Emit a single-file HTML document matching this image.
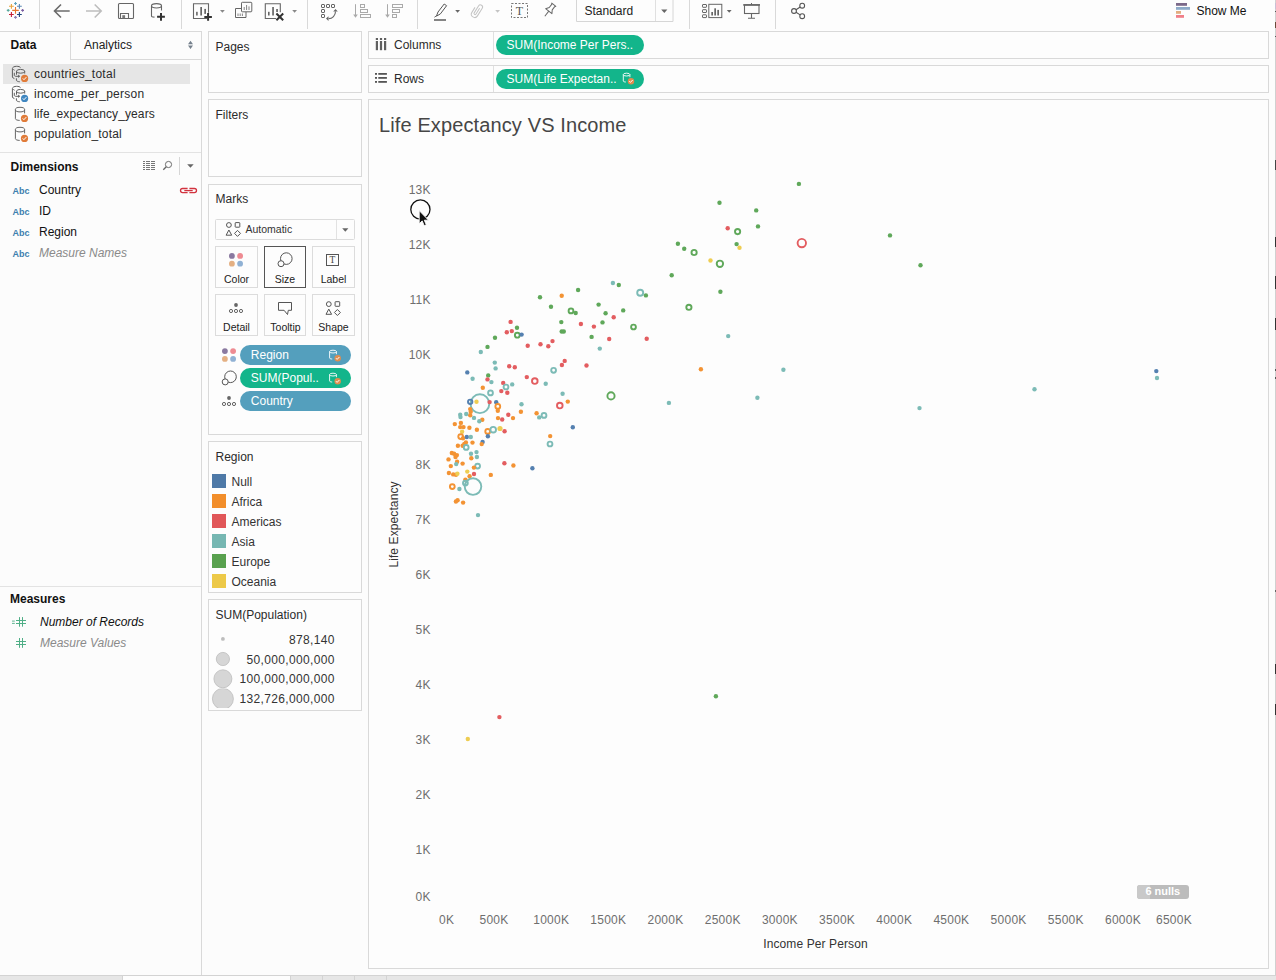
<!DOCTYPE html>
<html><head><meta charset="utf-8">
<style>
*{margin:0;padding:0;box-sizing:border-box}
html,body{width:1276px;height:980px;overflow:hidden;background:#fcfcfc;font-family:"Liberation Sans",sans-serif;color:#2b2b2b;font-size:12px}
.a{position:absolute}
.t{position:absolute;white-space:pre;line-height:14px;font-size:12px}
.card{position:absolute;border:1px solid #d9d9d9;background:#fdfdfd}
.hl{position:absolute;background:#dedede}
.vl{position:absolute;background:#d9d9d9}
.pill{position:absolute;border-radius:10px;color:#fff;font-size:12px;line-height:20px;white-space:pre}
.g{background:#13b58b}
.abc{position:absolute;font-size:9px;font-weight:bold;color:#3e7fae;line-height:10px;letter-spacing:0px}
</style></head><body>

<!-- TOOLBAR -->
<div class="a" style="left:0;top:0;width:1276px;height:31px;background:#fdfdfd"></div>
<div class="hl" style="left:0;top:31px;width:202px;height:1px;background:#d9d9d9"></div>
<svg class="a" style="left:0;top:0" width="1276" height="32">
<g stroke-linecap="butt">
<!-- tableau logo -->
<g stroke-width="1.1">
<path d="M15.5 7.1v6.6M12.2 10.4h6.6" stroke="#e8762d"/>
<path d="M11.4 3.9v4.8M9 6.3h4.8" stroke="#e8a23a"/>
<path d="M19.4 3.9v4.8M17 6.3h4.8" stroke="#5b87b5"/>
<path d="M11.4 12.1v4.8M9 14.5h4.8" stroke="#c72037"/>
<path d="M19.4 12.1v4.8M17 14.5h4.8" stroke="#1f457e"/>
<path d="M15.5 2.1v2.8M14.1 3.5h2.8" stroke="#5b9fbb"/>
<path d="M8.2 9v2.8M6.8 10.4h2.8" stroke="#59a89c"/>
<path d="M22.6 9v2.8M21.2 10.4h2.8" stroke="#7b5fa3"/>
<path d="M15.5 16v2.8M14.1 17.4h2.8" stroke="#8b79b0"/>
</g>
</g>
<rect x="39" y="0" width="1" height="29" fill="#d9d9d9"/>
<!-- back / forward -->
<path d="M54.5 11h15.2M61 4.5L54.5 11L61 17.5" fill="none" stroke="#6b6b6b" stroke-width="1.6"/>
<path d="M86 11h15.2M94.7 4.5L101.2 11L94.7 17.5" fill="none" stroke="#bdbdbd" stroke-width="1.6"/>
<!-- save -->
<rect x="118.5" y="3.5" width="15" height="15" rx="1" fill="none" stroke="#666" stroke-width="1.1"/>
<path d="M120.5 18.5v-5h8v5" fill="none" stroke="#666" stroke-width="1.1"/>
<rect x="122.3" y="15.2" width="2.8" height="3" fill="#777"/>
<!-- new data source -->
<path d="M151.5 6v10c0 .8 1.2 1.1 3 1.1M161.5 6v4.6" fill="none" stroke="#666" stroke-width="1.1"/>
<ellipse cx="156.5" cy="5.8" rx="5" ry="2.2" fill="none" stroke="#666" stroke-width="1.1"/>
<path d="M161 12.9v7.8M157.1 16.8h7.8" stroke="#333" stroke-width="2"/>
<rect x="181" y="0" width="1" height="29" fill="#d9d9d9"/>
<!-- new worksheet -->
<path d="M207 18.5h-13.5v-14.8h15v9" fill="none" stroke="#666" stroke-width="1.1"/>
<rect x="196.1" y="11.8" width="1.6" height="3.7" fill="#666"/>
<rect x="200.3" y="7" width="1.7" height="8.5" fill="#666"/>
<rect x="204.3" y="8.9" width="1.7" height="5" fill="#666"/>
<path d="M208.1 13.1v7.6M204.3 16.9h7.6" stroke="#333" stroke-width="2"/>
<path d="M220 10l4.8 0l-2.4 2.8z" fill="#888"/>
<!-- duplicate -->
<path d="M241 8.5h-5.5v9h10.5v-5.5" fill="none" stroke="#666" stroke-width="1"/>
<rect x="241.5" y="2.3" width="10.3" height="9.5" rx="0.8" fill="#fdfdfd" stroke="#666" stroke-width="1"/>
<path d="M244.2 10v-3M246.6 10v-5M249 10v-3.6M238 16v-2.5M240.2 16v-2.5M242.4 16v-2.5" stroke="#777" stroke-width="0.9"/>
<!-- clear sheet -->
<path d="M276 18.5h-10.7v-14.8h15v8.5" fill="none" stroke="#666" stroke-width="1.1"/>
<rect x="268" y="11.8" width="1.6" height="3.7" fill="#666"/>
<rect x="272.2" y="7" width="1.7" height="8.5" fill="#666"/>
<rect x="276.2" y="9" width="1.7" height="3" fill="#666"/>
<path d="M276.4 13.5l6.8 6.8M283.2 13.5l-6.8 6.8" stroke="#333" stroke-width="2"/>
<path d="M292.2 10l4.8 0l-2.4 2.8z" fill="#888"/>
<rect x="307" y="0" width="1" height="29" fill="#d9d9d9"/>
<!-- swap -->
<g fill="none" stroke="#666" stroke-width="1">
<rect x="321.5" y="4.5" width="3" height="3" rx=".5"/><rect x="326.5" y="4.5" width="3" height="3" rx=".5"/><rect x="331.5" y="4.5" width="3" height="3" rx=".5"/>
<rect x="321.5" y="9.5" width="3" height="3" rx=".5"/><rect x="321.5" y="14.5" width="3" height="3" rx=".5"/>
<path d="M328.6 18.6A7 7 0 0 0 335.5 11.6" stroke-width="1.1"/>
</g>
<path d="M335.5 9.1l2.3 2.5h-4.6z M326 18.6l2.5-2.3v4.6z" fill="#666"/>
<!-- sort asc -->
<g fill="none" stroke="#aaa" stroke-width="1">
<path d="M355.5 4.2v12"/>
<rect x="360.5" y="4.5" width="4" height="3"/><rect x="360.5" y="9.5" width="7" height="3"/><rect x="360.5" y="14.5" width="10" height="3"/>
<path d="M387.5 4.2v12"/>
<rect x="392.5" y="4.5" width="10" height="3"/><rect x="392.5" y="9.5" width="7" height="3"/><rect x="392.5" y="14.5" width="4" height="3"/>
</g>
<path d="M353.2 14.5h4.6l-2.3 3.3z M385.2 14.5h4.6l-2.3 3.3z" fill="#aaa"/>
<rect x="417" y="0" width="1" height="29" fill="#d9d9d9"/>
<!-- highlighter -->
<path d="M436.4 16.2l1.6-4.2l6.2-8l2.4 1.7l-6.2 8.2z" fill="none" stroke="#555" stroke-width="1"/>
<path d="M434.5 17.2l1.4-1" stroke="#555" stroke-width="1"/>
<rect x="434" y="19.2" width="12" height="1.6" fill="#666"/>
<path d="M455.2 10l4.8 0l-2.4 2.8z" fill="#666"/>
<!-- paperclip -->
<path transform="translate(477,10.4) rotate(32)" d="M1.1 -3.2V3.6A1.1 1.1 0 0 1 -1.1 3.6V-4.6A2.2 2.2 0 0 1 3.3 -4.6V4.4A3.3 3.3 0 0 1 -3.3 4.4V-1.5" fill="none" stroke="#c4c4c4" stroke-width="1"/>
<path d="M495.2 10l4.8 0l-2.4 2.8z" fill="#c4c4c4"/>
<!-- text box -->
<rect x="511.5" y="3.5" width="16" height="14" fill="none" stroke="#777" stroke-width="1" stroke-dasharray="2 1.5"/>
<text x="519.5" y="15" text-anchor="middle" font-family="Liberation Serif" font-size="12" fill="#555">T</text>
<!-- pin -->
<g transform="translate(550,9.6) rotate(38)" fill="none" stroke="#666" stroke-width="1" stroke-linejoin="round">
<path d="M-2.6 -6.2H2.6L1.9 -5.2V-1.2L4 2H-4L-1.9 -1.2V-5.2Z"/>
<path d="M0 2V8.4"/>
</g>
<!-- standard dropdown -->
<path d="M576.5 -1v22.5h96.5v-22.5" fill="#fdfdfd" stroke="#d6d6d6" stroke-width="1"/>
<rect x="655" y="0" width="1" height="21" fill="#e0e0e0"/>
<text x="584.5" y="14.8" font-family="Liberation Sans" font-size="12" fill="#222">Standard</text>
<path d="M661.2 9.5h6.2l-3.1 3.5z" fill="#666"/>
<rect x="689" y="0" width="1" height="29" fill="#d9d9d9"/>
<!-- dashboard icon -->
<g fill="none" stroke="#666" stroke-width="1">
<rect x="702.5" y="4.5" width="4" height="2.8" rx=".5"/><rect x="702.5" y="9.7" width="4" height="2.8" rx=".5"/><rect x="702.5" y="14.8" width="4" height="2.8" rx=".5"/>
<rect x="708.8" y="4.3" width="13" height="13.3"/>
</g>
<rect x="711.3" y="12" width="1.7" height="3.5" fill="#666"/><rect x="714.3" y="8.3" width="1.7" height="7.2" fill="#666"/><rect x="717.3" y="9.9" width="1.7" height="5.6" fill="#666"/>
<path d="M726.8 10h4.8l-2.4 2.8z" fill="#666"/>
<!-- presentation -->
<path d="M743.2 4.9h16.8" stroke="#666" stroke-width="1.6"/>
<rect x="744.5" y="5" width="14.5" height="8.5" fill="none" stroke="#666" stroke-width="1.1"/>
<path d="M751.5 13.5v4.5M748 18.3h7" stroke="#666" stroke-width="1.1"/>
<path d="M751.5 3v2" stroke="#666" stroke-width="1"/>
<rect x="775" y="0" width="1" height="29" fill="#d9d9d9"/>
<!-- share -->
<g fill="none" stroke="#555" stroke-width="1.1">
<circle cx="802.2" cy="5.7" r="2.4"/><circle cx="794" cy="11" r="2.4"/><circle cx="802.2" cy="16.2" r="2.4"/>
<path d="M796 9.7l4.2-2.7M796 12.3l4.2 2.6"/>
</g>
<!-- show me -->
<rect x="1176" y="3" width="11" height="2.8" fill="#7c6a8a"/>
<rect x="1176" y="7" width="14" height="2.8" fill="#8eabc9"/>
<rect x="1176" y="11" width="5" height="2.8" fill="#e2ad80"/>
<rect x="1176" y="15" width="8" height="2.8" fill="#f07f89"/>
<text x="1196.5" y="15" font-family="Liberation Sans" font-size="12" fill="#111">Show Me</text>
</svg>


<!-- LEFT PANE -->
<div class="vl" style="left:201px;top:31px;width:1px;height:944px"></div>
<div class="t" style="left:10.5px;top:38px;font-weight:bold;color:#111">Data</div>
<div class="a" style="left:70px;top:31px;width:131px;height:29px;border-left:1px solid #d9d9d9;border-bottom:1px solid #d9d9d9"></div>
<div class="t" style="left:84px;top:38px;color:#222">Analytics</div>
<div class="a" style="left:3px;top:64px;width:187px;height:20px;background:#e6e6e6"></div>
<div class="t" style="left:34px;top:67px;letter-spacing:0.25px">countries_total</div>
<div class="t" style="left:34px;top:87px;letter-spacing:0.25px">income_per_person</div>
<div class="t" style="left:34px;top:107px;letter-spacing:0.1px">life_expectancy_years</div>
<div class="t" style="left:34px;top:127px;letter-spacing:0.2px">population_total</div>
<div class="hl" style="left:0;top:152px;width:201px;height:1px;background:#e3e3e3"></div>
<div class="t" style="left:10.5px;top:160px;font-weight:bold;color:#111">Dimensions</div>
<div class="abc" style="left:12.5px;top:185.5px">Abc</div>
<div class="t" style="left:39px;top:183px;color:#111">Country</div>
<div class="abc" style="left:12.5px;top:206.5px">Abc</div>
<div class="t" style="left:39px;top:204px;color:#111">ID</div>
<div class="abc" style="left:12.5px;top:227.5px">Abc</div>
<div class="t" style="left:39px;top:225px;color:#111">Region</div>
<div class="abc" style="left:12.5px;top:248.5px">Abc</div>
<div class="t" style="left:39px;top:246px;font-style:italic;color:#8a8a8a">Measure Names</div>
<div class="hl" style="left:0;top:586px;width:201px;height:1px;background:#e3e3e3"></div>
<div class="t" style="left:10px;top:592px;font-weight:bold;color:#111">Measures</div>
<div class="t" style="left:40px;top:615px;font-style:italic;color:#111">Number of Records</div>
<div class="t" style="left:40px;top:636px;font-style:italic;color:#8a8a8a">Measure Values</div>
<svg class="a" style="left:0;top:32px" width="201" height="640" viewBox="0 32 201 640">
<defs>
<g id="chk"><circle r="3.6"/><path d="M-1.8 0l1.2 1.3l2.4-2.6" fill="none" stroke="#fff" stroke-width="1"/></g>
<g id="multidb" fill="none" stroke="#5f5f5f" stroke-width="1">
<path d="M12.4 77V68.6C12.4 67.2 14.4 66.3 16.6 66.3C18.4 66.3 19.9 66.8 20.5 67.5"/>
<path d="M12.4 77C12.6 77.8 13.4 78.3 14.4 78.6"/>
<path d="M13.4 69.2C13.6 69.8 14 70.1 14.5 70.3"/>
<path d="M14.3 72.8V75.2C14.3 75.9 14.9 76.3 15.8 76.3H19"/>
<path d="M18.2 74.6l2 1.7l-2 1.7z" fill="#5f5f5f" stroke="none"/>
<ellipse cx="20.6" cy="71.3" rx="4.1" ry="1.9"/>
<path d="M16.5 71.3V74.7M24.7 71.3V73.6"/>
<path d="M16.4 78.3V80.2C16.4 81 17.8 81.6 19.8 81.8"/>
</g>
</defs>
<path d="M188 44.2h5l-2.5-3.4z M188 45.6h5l-2.5 3.4z" fill="#75808c"/>
<!-- data source icons -->
<use href="#multidb"/>
<use href="#chk" x="24.6" y="78.4" fill="#e07b39"/>
<use href="#multidb" y="20"/>
<use href="#chk" x="24.6" y="98.4" fill="#3f86c0"/>
<g fill="none" stroke="#666" stroke-width="1">
<ellipse cx="20" cy="109.6" rx="4.6" ry="2.3"/>
<path d="M15.4 109.6v9c0 1.1 2 1.8 4.3 1.8M24.6 109.6v3.8"/>
<ellipse cx="20" cy="129.6" rx="4.6" ry="2.3"/>
<path d="M15.4 129.6v9c0 1.1 2 1.8 4.3 1.8M24.6 129.6v3.8"/>
</g>
<use href="#chk" x="24.5" y="118.4" fill="#e07b39"/>
<use href="#chk" x="24.5" y="138.4" fill="#e07b39"/>
<!-- dimensions header icons -->
<g stroke="#666" stroke-width="0.9">
<path d="M143 161.5h2M146 161.5h4M151 161.5h4M143 163.5h2M146 163.5h4M151 163.5h4M143 165.5h2M146 165.5h4M151 165.5h4M143 167.5h2M146 167.5h4M151 167.5h4M143 169.5h2M146 169.5h4M151 169.5h4"/>
</g>
<circle cx="168.5" cy="164.5" r="3.1" fill="none" stroke="#666" stroke-width="0.95"/>
<path d="M166.3 166.8l-3 3" stroke="#666" stroke-width="1.3"/>
<rect x="179" y="157" width="1" height="18" fill="#d6d6d6"/>
<path d="M187.2 164.2h6.5l-3.25 3.6z" fill="#666"/>
<!-- link icon -->
<g fill="none" stroke="#d2333f" stroke-width="1.3">
<path d="M187.6 188.5H182.6A2.1 2.1 0 0 0 182.6 192.7H187.6"/>
<path d="M189.4 188.5H194.4A2.1 2.1 0 0 1 194.4 192.7H189.4"/>
<path d="M184.3 190.6H192.7"/>
</g>
<!-- measures icons -->
<g stroke="#4fae86" stroke-width="1">
<path d="M19.5 617.1v9.6M22.5 617.1v9.6M16 620.5h10M16 623.5h10"/>
<path d="M12 621.1h2.8M12 623.4h2.8" stroke-width="0.9"/>
<path d="M19.5 638v9.8M22.5 638v9.8M16 641.5h10M16 644.5h10"/>
</g>
</svg>


<!-- MIDDLE CARDS -->
<div class="card" style="left:208px;top:31px;width:154px;height:62px"></div>
<div class="t" style="left:215.5px;top:40px">Pages</div>
<div class="card" style="left:208px;top:99px;width:154px;height:78px"></div>
<div class="t" style="left:215.5px;top:108px">Filters</div>
<div class="card" style="left:208px;top:184px;width:154px;height:251px"></div>
<div class="t" style="left:215.5px;top:191.5px">Marks</div>
<div class="card" style="left:208px;top:441px;width:154px;height:152px"></div>
<div class="t" style="left:215.5px;top:449.5px">Region</div>
<div class="card" style="left:208px;top:599px;width:154px;height:112px"></div>
<div class="t" style="left:215.5px;top:607.5px">SUM(Population)</div>
<svg class="a" style="left:208px;top:184px" width="160" height="530" viewBox="208 184 160 530">
<defs>
<g id="chk2"><circle r="3.2" fill="#e08d4f"/><path d="M-1.7 0l1.1 1.2l2.3-2.4" fill="none" stroke="#fff" stroke-width="1"/></g>
<g id="shapes" fill="none" stroke="#555" stroke-width="1">
<circle cx="0" cy="0" r="2.4"/>
<rect x="6.3" y="-2.4" width="4.6" height="4.6" rx=".5"/>
<path d="M-2.8 10.2h5.6l-2.8-5.2z"/>
<path d="M8.6 5.4l3 3l-3 3l-3-3z"/>
</g>
<g id="sizeic" stroke="#555" stroke-width="1">
<circle cx="5.3" cy="-5.1" r="5.8" fill="none"/>
<circle cx="0" cy="0" r="3" fill="#fdfdfd"/>
</g>
<g id="detailic">
<circle cx="0" cy="0" r="1.9" fill="#666"/>
<g fill="none" stroke="#555" stroke-width="0.9"><circle cx="-5" cy="6" r="1.6"/><circle cx="0" cy="6" r="1.6"/><circle cx="5" cy="6" r="1.6"/></g>
</g>
<g id="colorsic">
<circle cx="0" cy="0" r="2.9" fill="#8a79a0"/><circle cx="8.2" cy="0" r="2.9" fill="#ee8b92"/>
<circle cx="0" cy="7.8" r="2.9" fill="#e4b083"/><circle cx="8.2" cy="7.8" r="2.9" fill="#90b1d4"/>
</g>
</defs>
<!-- marks type dropdown -->
<rect x="215.5" y="219.5" width="139" height="20" rx="1" fill="#fdfdfd" stroke="#dcdcdc"/>
<rect x="336" y="220" width="1" height="19" fill="#e2e2e2"/>
<path d="M342.2 228.3h6.2l-3.1 3.4z" fill="#666"/>
<use href="#shapes" x="228.9" y="225"/>
<text x="245.5" y="232.8" font-family="Liberation Sans" font-size="10.5" fill="#333">Automatic</text>
<!-- buttons -->
<g fill="#fdfdfd" stroke="#dcdcdc">
<rect x="215.5" y="246.5" width="42" height="41"/>
<rect x="312.5" y="246.5" width="42" height="41"/>
<rect x="215.5" y="294.5" width="42" height="41"/>
<rect x="264.5" y="294.5" width="41" height="41"/>
<rect x="312.5" y="294.5" width="42" height="41"/>
</g>
<rect x="264.5" y="246.5" width="41" height="41" fill="#fdfdfd" stroke="#555"/>
<use href="#colorsic" x="231.9" y="255.9"/>
<use href="#sizeic" x="281" y="263.7"/>
<rect x="326.5" y="254.5" width="12" height="11" fill="none" stroke="#555" stroke-width="1"/>
<text x="332.5" y="263.3" text-anchor="middle" font-family="Liberation Serif" font-size="9.5" fill="#444">T</text>
<use href="#detailic" x="236" y="305"/>
<path d="M278.5 302.5h13v7.8h-3.2l-.8 4.2l-3.4-4.2h-5.6z" fill="none" stroke="#555" stroke-width="1" stroke-linejoin="round"/>
<use href="#shapes" x="328.8" y="304.1"/>
<g font-family="Liberation Sans" font-size="10.5" fill="#222" text-anchor="middle">
<text x="236.5" y="282.5">Color</text>
<text x="285" y="282.5">Size</text>
<text x="333.5" y="282.5">Label</text>
<text x="236.5" y="330.8">Detail</text>
<text x="285.5" y="330.8">Tooltip</text>
<text x="333.5" y="330.8">Shape</text>
</g>
<!-- pills -->
<use href="#colorsic" x="224.9" y="351.1"/>
<rect x="240" y="345" width="111" height="20" rx="10" fill="#549fbd"/>
<text x="250.8" y="358.8" font-family="Liberation Sans" font-size="12" fill="#fff">Region</text>
<g fill="none" stroke="#fff" stroke-width="0.9"><ellipse cx="333" cy="351.6" rx="3.4" ry="1.4"/><path d="M329.6 351.6v6.3c0 .7 1.3 1.1 2.6 1.1M336.4 351.6v2.6"/></g>
<use href="#chk2" x="337.7" y="358.2"/>
<use href="#sizeic" x="225.2" y="381.9"/>
<rect x="240" y="368" width="111" height="20" rx="10" fill="#13b58b"/>
<text x="250.8" y="381.8" font-family="Liberation Sans" font-size="12" fill="#fff">SUM(Popul..</text>
<g fill="none" stroke="#fff" stroke-width="0.9"><ellipse cx="333" cy="374.6" rx="3.4" ry="1.4"/><path d="M329.6 374.6v6.3c0 .7 1.3 1.1 2.6 1.1M336.4 374.6v2.6"/></g>
<use href="#chk2" x="337.7" y="381.2"/>
<use href="#detailic" x="229" y="398"/>
<rect x="240" y="391" width="111" height="20" rx="10" fill="#549fbd"/>
<text x="250.8" y="405" font-family="Liberation Sans" font-size="12" fill="#fff">Country</text>
<!-- legend swatches -->
<rect x="212" y="474" width="14" height="14" fill="#4e79a7"/>
<rect x="212" y="494" width="14" height="14" fill="#f28e2b"/>
<rect x="212" y="514" width="14" height="14" fill="#e15759"/>
<rect x="212" y="534" width="14" height="14" fill="#76b7b2"/>
<rect x="212" y="554" width="14" height="14" fill="#59a14f"/>
<rect x="212" y="574" width="14" height="14" fill="#edc948"/>
<g font-family="Liberation Sans" font-size="12" fill="#333">
<text x="231.5" y="485.7">Null</text>
<text x="231.5" y="505.7">Africa</text>
<text x="231.5" y="525.7">Americas</text>
<text x="231.5" y="545.7">Asia</text>
<text x="231.5" y="565.7">Europe</text>
<text x="231.5" y="585.7">Oceania</text>
</g>
<!-- size legend -->
<defs><clipPath id="cl4"><rect x="210" y="688.5" width="30" height="19.5"/></clipPath></defs>
<circle cx="222.9" cy="638.9" r="1.9" fill="#bdbdbd"/>
<circle cx="222.9" cy="659" r="6.6" fill="#d6d6d6" stroke="#bcbcbc" stroke-width="0.8"/>
<circle cx="222.9" cy="678.8" r="9" fill="#d6d6d6" stroke="#bcbcbc" stroke-width="0.8"/>
<circle cx="222.9" cy="698.8" r="10.5" fill="#d6d6d6" stroke="#bcbcbc" stroke-width="0.8" clip-path="url(#cl4)"/>
<g font-family="Liberation Sans" font-size="12" fill="#333" text-anchor="end" letter-spacing="0.35">
<text x="334.8" y="644">878,140</text>
<text x="334.8" y="663.7">50,000,000,000</text>
<text x="334.8" y="683.4">100,000,000,000</text>
<text x="334.8" y="703.1">132,726,000,000</text>
</g>
</svg>


<!-- SHELVES -->
<div class="card" style="left:368px;top:31px;width:901px;height:28px"></div>
<div class="vl" style="left:493px;top:32px;width:1px;height:26px;background:#e0e0e0"></div>
<div class="t" style="left:394px;top:38px">Columns</div>
<div class="pill g" style="left:496px;top:35px;width:148px;height:20px;padding-left:10.5px">SUM(Income Per Pers..</div>
<div class="card" style="left:368px;top:65px;width:901px;height:28px"></div>
<div class="vl" style="left:493px;top:66px;width:1px;height:26px;background:#e0e0e0"></div>
<div class="t" style="left:394px;top:72px">Rows</div>
<div class="pill g" style="left:496px;top:69px;width:148px;height:20px;padding-left:10.5px">SUM(Life Expectan..</div>

<!-- VIZ -->
<div class="card" style="left:368px;top:99px;width:901px;height:870px;background:#fdfdfd"></div>
<div class="t" style="left:379px;top:113px;font-size:20px;line-height:24px;color:#464646;letter-spacing:0.12px">Life Expectancy VS Income</div>
<svg class="a" style="left:0;top:0" width="1276" height="980">
<style>.ax{font-family:"Liberation Sans",sans-serif;font-size:12px;fill:#6e6e6e;letter-spacing:0.25px}.at{font-family:"Liberation Sans",sans-serif;font-size:12px;fill:#333;letter-spacing:0.1px}</style>
<text x="430.8" y="900.5" text-anchor="end" class="ax">0K</text>
<text x="430.8" y="854.4" text-anchor="end" class="ax">1K</text>
<text x="430.8" y="799.3" text-anchor="end" class="ax">2K</text>
<text x="430.8" y="744.3" text-anchor="end" class="ax">3K</text>
<text x="430.8" y="689.2" text-anchor="end" class="ax">4K</text>
<text x="430.8" y="634.1" text-anchor="end" class="ax">5K</text>
<text x="430.8" y="579.0" text-anchor="end" class="ax">6K</text>
<text x="430.8" y="523.9" text-anchor="end" class="ax">7K</text>
<text x="430.8" y="468.9" text-anchor="end" class="ax">8K</text>
<text x="430.8" y="413.8" text-anchor="end" class="ax">9K</text>
<text x="430.8" y="358.7" text-anchor="end" class="ax">10K</text>
<text x="430.8" y="303.6" text-anchor="end" class="ax">11K</text>
<text x="430.8" y="248.5" text-anchor="end" class="ax">12K</text>
<text x="430.8" y="193.5" text-anchor="end" class="ax">13K</text>
<text x="439" y="923.8" class="ax">0K</text>
<text x="494.0" y="923.8" text-anchor="middle" class="ax">500K</text>
<text x="551.2" y="923.8" text-anchor="middle" class="ax">1000K</text>
<text x="608.3" y="923.8" text-anchor="middle" class="ax">1500K</text>
<text x="665.5" y="923.8" text-anchor="middle" class="ax">2000K</text>
<text x="722.7" y="923.8" text-anchor="middle" class="ax">2500K</text>
<text x="779.9" y="923.8" text-anchor="middle" class="ax">3000K</text>
<text x="837.1" y="923.8" text-anchor="middle" class="ax">3500K</text>
<text x="894.2" y="923.8" text-anchor="middle" class="ax">4000K</text>
<text x="951.4" y="923.8" text-anchor="middle" class="ax">4500K</text>
<text x="1008.6" y="923.8" text-anchor="middle" class="ax">5000K</text>
<text x="1065.8" y="923.8" text-anchor="middle" class="ax">5500K</text>
<text x="1123.0" y="923.8" text-anchor="middle" class="ax">6000K</text>
<text x="1174" y="923.8" text-anchor="middle" class="ax">6500K</text>
<text x="815.5" y="948" text-anchor="middle" class="at">Income Per Person</text>
<text transform="translate(398.4,524.5) rotate(-90)" text-anchor="middle" class="at">Life Expectancy</text>
<circle cx="798.9" cy="183.9" r="2.2" fill="#5fa85a"/>
<circle cx="719.5" cy="202.7" r="2.2" fill="#5fa85a"/>
<circle cx="756.2" cy="210.4" r="2.2" fill="#5fa85a"/>
<circle cx="758.0" cy="226.4" r="2.2" fill="#5fa85a"/>
<circle cx="727.7" cy="228.3" r="2.2" fill="#e35d60"/>
<circle cx="737.6" cy="231.6" r="2.6" fill="none" stroke="#5fa85a" stroke-width="1.9"/>
<circle cx="890.0" cy="235.4" r="2.2" fill="#5fa85a"/>
<circle cx="801.8" cy="243.1" r="4.2" fill="none" stroke="#e35d60" stroke-width="1.9"/>
<circle cx="736.6" cy="244.1" r="2.2" fill="#5fa85a"/>
<circle cx="739.5" cy="247.8" r="2.2" fill="#eecd52"/>
<circle cx="677.9" cy="243.8" r="2.2" fill="#5fa85a"/>
<circle cx="684.2" cy="248.8" r="2.2" fill="#5fa85a"/>
<circle cx="694.1" cy="252.5" r="2.6" fill="none" stroke="#5fa85a" stroke-width="1.9"/>
<circle cx="710.5" cy="260.5" r="2.2" fill="#eecd52"/>
<circle cx="719.9" cy="263.8" r="3.2" fill="none" stroke="#5fa85a" stroke-width="1.9"/>
<circle cx="920.5" cy="265.2" r="2.2" fill="#5fa85a"/>
<circle cx="671.7" cy="275.3" r="2.2" fill="#5fa85a"/>
<circle cx="720.4" cy="291.8" r="2.2" fill="#5fa85a"/>
<circle cx="640.2" cy="292.8" r="3.0" fill="none" stroke="#7cbbb6" stroke-width="1.9"/>
<circle cx="645.9" cy="295.4" r="2.2" fill="#5fa85a"/>
<circle cx="688.9" cy="307.3" r="2.6" fill="none" stroke="#5fa85a" stroke-width="1.9"/>
<circle cx="1156.3" cy="371.1" r="2.2" fill="#5480b0"/>
<circle cx="1157.0" cy="378.0" r="2.2" fill="#7cbbb6"/>
<circle cx="1034.5" cy="389.3" r="2.2" fill="#7cbbb6"/>
<circle cx="919.5" cy="408.1" r="2.2" fill="#7cbbb6"/>
<circle cx="646.7" cy="338.8" r="2.2" fill="#e35d60"/>
<circle cx="728.2" cy="336.1" r="2.2" fill="#7cbbb6"/>
<circle cx="700.9" cy="369.3" r="2.2" fill="#f39334"/>
<circle cx="783.4" cy="369.7" r="2.2" fill="#7cbbb6"/>
<circle cx="668.9" cy="402.9" r="2.2" fill="#7cbbb6"/>
<circle cx="757.4" cy="397.8" r="2.2" fill="#7cbbb6"/>
<circle cx="612.9" cy="283.0" r="2.2" fill="#7cbbb6"/>
<circle cx="618.8" cy="285.0" r="2.2" fill="#5fa85a"/>
<circle cx="578.1" cy="290.0" r="2.2" fill="#5fa85a"/>
<circle cx="561.7" cy="295.7" r="2.2" fill="#f39334"/>
<circle cx="540.0" cy="297.2" r="2.2" fill="#5fa85a"/>
<circle cx="551.0" cy="306.8" r="2.2" fill="#5fa85a"/>
<circle cx="598.6" cy="304.6" r="2.2" fill="#5fa85a"/>
<circle cx="571.0" cy="310.9" r="2.4" fill="none" stroke="#5fa85a" stroke-width="1.9"/>
<circle cx="575.7" cy="313.0" r="2.2" fill="#5fa85a"/>
<circle cx="605.6" cy="313.2" r="2.2" fill="#5fa85a"/>
<circle cx="623.2" cy="310.4" r="2.2" fill="#5fa85a"/>
<circle cx="613.7" cy="317.2" r="2.2" fill="#e35d60"/>
<circle cx="510.6" cy="321.9" r="2.2" fill="#e35d60"/>
<circle cx="561.3" cy="322.1" r="2.2" fill="#5fa85a"/>
<circle cx="580.9" cy="324.0" r="2.2" fill="#e35d60"/>
<circle cx="593.9" cy="326.6" r="2.2" fill="#e35d60"/>
<circle cx="602.5" cy="322.4" r="2.2" fill="#5fa85a"/>
<circle cx="633.5" cy="327.0" r="2.4" fill="none" stroke="#5fa85a" stroke-width="1.9"/>
<circle cx="517.0" cy="327.7" r="2.2" fill="#5fa85a"/>
<circle cx="506.8" cy="332.2" r="2.2" fill="#e35d60"/>
<circle cx="511.8" cy="331.1" r="2.2" fill="#e35d60"/>
<circle cx="517.3" cy="335.2" r="2.4" fill="none" stroke="#5fa85a" stroke-width="1.9"/>
<circle cx="521.6" cy="334.6" r="2.2" fill="#5480b0"/>
<circle cx="561.7" cy="331.5" r="2.2" fill="#5fa85a"/>
<circle cx="563.8" cy="331.5" r="2.2" fill="#5fa85a"/>
<circle cx="495.0" cy="337.7" r="2.2" fill="#5fa85a"/>
<circle cx="591.6" cy="336.9" r="2.2" fill="#5fa85a"/>
<circle cx="609.2" cy="339.0" r="2.2" fill="#e35d60"/>
<circle cx="487.5" cy="346.9" r="2.2" fill="#5fa85a"/>
<circle cx="527.7" cy="345.8" r="2.2" fill="#e35d60"/>
<circle cx="540.5" cy="344.3" r="2.2" fill="#e35d60"/>
<circle cx="548.3" cy="346.3" r="2.2" fill="#e35d60"/>
<circle cx="552.5" cy="341.1" r="2.2" fill="#e35d60"/>
<circle cx="599.8" cy="348.6" r="2.2" fill="#7cbbb6"/>
<circle cx="480.8" cy="352.0" r="2.2" fill="#7cbbb6"/>
<circle cx="494.8" cy="362.6" r="2.2" fill="#7cbbb6"/>
<circle cx="495.6" cy="368.4" r="2.2" fill="#7cbbb6"/>
<circle cx="509.2" cy="366.3" r="2.2" fill="#e35d60"/>
<circle cx="514.8" cy="367.3" r="2.2" fill="#e35d60"/>
<circle cx="564.7" cy="360.9" r="2.2" fill="#e35d60"/>
<circle cx="561.9" cy="365.0" r="2.2" fill="#e35d60"/>
<circle cx="553.6" cy="370.3" r="2.4" fill="none" stroke="#7cbbb6" stroke-width="1.9"/>
<circle cx="467.3" cy="372.4" r="2.2" fill="#5480b0"/>
<circle cx="488.2" cy="375.4" r="2.2" fill="#5fa85a"/>
<circle cx="487.5" cy="379.4" r="2.2" fill="#e35d60"/>
<circle cx="472.6" cy="378.8" r="2.2" fill="#7cbbb6"/>
<circle cx="491.4" cy="382.1" r="2.2" fill="#7cbbb6"/>
<circle cx="526.8" cy="377.1" r="2.2" fill="#e35d60"/>
<circle cx="534.8" cy="381.1" r="2.8" fill="none" stroke="#e35d60" stroke-width="1.9"/>
<circle cx="545.7" cy="383.8" r="2.2" fill="#7cbbb6"/>
<circle cx="503.2" cy="382.9" r="2.2" fill="#e35d60"/>
<circle cx="506.0" cy="387.0" r="2.4" fill="none" stroke="#7cbbb6" stroke-width="1.9"/>
<circle cx="512.2" cy="384.4" r="2.2" fill="#7cbbb6"/>
<circle cx="482.8" cy="387.8" r="2.2" fill="#f39334"/>
<circle cx="501.3" cy="391.1" r="2.2" fill="#e35d60"/>
<circle cx="507.3" cy="392.7" r="2.2" fill="#e35d60"/>
<circle cx="490.5" cy="392.9" r="2.4" fill="none" stroke="#7cbbb6" stroke-width="1.9"/>
<circle cx="562.6" cy="393.7" r="2.2" fill="#7cbbb6"/>
<circle cx="586.5" cy="365.5" r="2.2" fill="#e35d60"/>
<circle cx="611.0" cy="395.9" r="3.6" fill="none" stroke="#5fa85a" stroke-width="1.9"/>
<circle cx="572.8" cy="427.2" r="2.2" fill="#5480b0"/>
<circle cx="479.9" cy="403.7" r="9.4" fill="none" stroke="#7cbbb6" stroke-width="1.9"/>
<circle cx="470.2" cy="401.8" r="2.2" fill="none" stroke="#5480b0" stroke-width="1.9"/>
<circle cx="476.5" cy="401.8" r="2.2" fill="#eecd52"/>
<circle cx="489.6" cy="402.1" r="2.2" fill="#e35d60"/>
<circle cx="496.2" cy="402.3" r="2.2" fill="#5480b0"/>
<circle cx="497.8" cy="406.4" r="2.4" fill="none" stroke="#f39334" stroke-width="1.9"/>
<circle cx="497.8" cy="410.7" r="2.2" fill="#f39334"/>
<circle cx="567.8" cy="401.6" r="2.2" fill="#f39334"/>
<circle cx="559.8" cy="405.6" r="2.8" fill="none" stroke="#e35d60" stroke-width="1.9"/>
<circle cx="521.5" cy="404.2" r="2.2" fill="#7cbbb6"/>
<circle cx="520.9" cy="411.7" r="2.2" fill="#f39334"/>
<circle cx="536.6" cy="413.2" r="2.2" fill="#f39334"/>
<circle cx="544.0" cy="415.4" r="2.4" fill="none" stroke="#7cbbb6" stroke-width="1.9"/>
<circle cx="539.2" cy="417.4" r="2.2" fill="#7cbbb6"/>
<circle cx="508.3" cy="414.8" r="2.2" fill="#e35d60"/>
<circle cx="513.0" cy="418.1" r="2.2" fill="#f39334"/>
<circle cx="498.0" cy="418.1" r="2.2" fill="#f39334"/>
<circle cx="502.2" cy="419.5" r="2.2" fill="#e35d60"/>
<circle cx="482.3" cy="419.8" r="2.2" fill="#f39334"/>
<circle cx="470.2" cy="409.1" r="2.2" fill="#f39334"/>
<circle cx="470.7" cy="411.7" r="2.2" fill="#f39334"/>
<circle cx="470.2" cy="415.2" r="2.2" fill="#f39334"/>
<circle cx="460.2" cy="414.8" r="2.2" fill="#7cbbb6"/>
<circle cx="460.5" cy="417.1" r="2.2" fill="#7cbbb6"/>
<circle cx="466.2" cy="414.0" r="2.2" fill="#7cbbb6"/>
<circle cx="474.0" cy="417.9" r="2.2" fill="#7cbbb6"/>
<circle cx="479.3" cy="421.3" r="2.2" fill="#7cbbb6"/>
<circle cx="454.8" cy="424.1" r="2.2" fill="#f39334"/>
<circle cx="460.9" cy="422.9" r="2.2" fill="#f39334"/>
<circle cx="460.2" cy="427.1" r="2.2" fill="#f39334"/>
<circle cx="463.5" cy="427.1" r="2.2" fill="#f39334"/>
<circle cx="469.4" cy="427.7" r="2.2" fill="#f39334"/>
<circle cx="476.9" cy="429.8" r="2.2" fill="#f39334"/>
<circle cx="462.1" cy="431.8" r="2.2" fill="#eecd52"/>
<circle cx="487.7" cy="431.4" r="2.4" fill="none" stroke="#f39334" stroke-width="1.9"/>
<circle cx="493.2" cy="429.7" r="2.8" fill="none" stroke="#7cbbb6" stroke-width="1.9"/>
<circle cx="500.0" cy="428.5" r="2.6" fill="#eecd52"/>
<circle cx="504.6" cy="431.3" r="2.2" fill="#e35d60"/>
<circle cx="460.7" cy="436.6" r="2.4" fill="none" stroke="#f39334" stroke-width="1.9"/>
<circle cx="463.0" cy="438.2" r="2.2" fill="#f39334"/>
<circle cx="466.8" cy="437.0" r="2.2" fill="#5480b0"/>
<circle cx="470.8" cy="437.0" r="2.2" fill="#7cbbb6"/>
<circle cx="487.9" cy="436.3" r="2.2" fill="#5480b0"/>
<circle cx="550.2" cy="436.1" r="2.2" fill="#f39334"/>
<circle cx="550.0" cy="444.0" r="2.4" fill="none" stroke="#7cbbb6" stroke-width="1.9"/>
<circle cx="482.6" cy="442.0" r="2.2" fill="#5480b0"/>
<circle cx="481.7" cy="444.1" r="2.2" fill="#f39334"/>
<circle cx="472.5" cy="442.6" r="2.2" fill="#f39334"/>
<circle cx="465.9" cy="442.4" r="2.2" fill="#f39334"/>
<circle cx="462.6" cy="445.7" r="2.2" fill="#f39334"/>
<circle cx="464.3" cy="444.0" r="2.2" fill="#f39334"/>
<circle cx="466.2" cy="447.4" r="2.4" fill="none" stroke="#7cbbb6" stroke-width="1.9"/>
<circle cx="457.9" cy="445.7" r="2.2" fill="#f39334"/>
<circle cx="476.5" cy="452.1" r="2.2" fill="#7cbbb6"/>
<circle cx="471.0" cy="453.7" r="2.2" fill="#7cbbb6"/>
<circle cx="476.9" cy="457.0" r="2.2" fill="#7cbbb6"/>
<circle cx="471.3" cy="458.2" r="2.2" fill="#f39334"/>
<circle cx="451.8" cy="453.0" r="2.2" fill="#f39334"/>
<circle cx="454.1" cy="453.7" r="2.2" fill="#f39334"/>
<circle cx="456.9" cy="455.1" r="2.2" fill="#f39334"/>
<circle cx="455.5" cy="457.0" r="2.2" fill="#f39334"/>
<circle cx="448.5" cy="459.4" r="2.2" fill="#f39334"/>
<circle cx="457.1" cy="461.7" r="2.2" fill="#f39334"/>
<circle cx="456.2" cy="464.1" r="2.2" fill="#7cbbb6"/>
<circle cx="462.6" cy="463.6" r="2.2" fill="#f39334"/>
<circle cx="450.8" cy="466.1" r="2.2" fill="#f39334"/>
<circle cx="477.6" cy="466.1" r="2.4" fill="none" stroke="#7cbbb6" stroke-width="1.9"/>
<circle cx="473.9" cy="467.6" r="2.2" fill="#f39334"/>
<circle cx="504.4" cy="463.3" r="2.2" fill="#e35d60"/>
<circle cx="513.4" cy="465.5" r="2.2" fill="#f39334"/>
<circle cx="532.4" cy="468.3" r="2.2" fill="#5480b0"/>
<circle cx="448.9" cy="473.0" r="2.2" fill="#f39334"/>
<circle cx="453.2" cy="474.4" r="2.2" fill="#f39334"/>
<circle cx="456.0" cy="474.7" r="2.2" fill="#f39334"/>
<circle cx="457.4" cy="473.8" r="2.2" fill="#eecd52"/>
<circle cx="467.3" cy="471.6" r="2.2" fill="#eecd52"/>
<circle cx="474.0" cy="474.0" r="2.2" fill="#e35d60"/>
<circle cx="469.6" cy="476.3" r="2.2" fill="#f39334"/>
<circle cx="490.8" cy="474.9" r="2.2" fill="#f39334"/>
<circle cx="465.4" cy="479.6" r="2.2" fill="#f39334"/>
<circle cx="465.4" cy="483.1" r="2.4" fill="none" stroke="#7cbbb6" stroke-width="1.9"/>
<circle cx="473.0" cy="486.6" r="8.3" fill="none" stroke="#7cbbb6" stroke-width="1.9"/>
<circle cx="452.3" cy="486.6" r="2.4" fill="none" stroke="#f39334" stroke-width="1.9"/>
<circle cx="459.4" cy="489.0" r="2.2" fill="#7cbbb6"/>
<circle cx="455.9" cy="501.5" r="2.2" fill="#f39334"/>
<circle cx="457.6" cy="500.3" r="2.2" fill="#f39334"/>
<circle cx="463.1" cy="502.6" r="2.2" fill="#f39334"/>
<circle cx="478.0" cy="515.1" r="2.2" fill="#7cbbb6"/>
<circle cx="715.9" cy="696.3" r="2.2" fill="#5fa85a"/>
<circle cx="499.4" cy="717.1" r="2.2" fill="#e35d60"/>
<circle cx="467.8" cy="739.0" r="2.2" fill="#eecd52"/>
</svg>
<svg class="a" style="left:368px;top:30px" width="908" height="950" viewBox="368 30 908 950">
<!-- columns icon iii -->
<g fill="#606060">
<rect x="375.8" y="41" width="2.2" height="9.2"/><rect x="379.9" y="41" width="2.2" height="9.2"/><rect x="384" y="41" width="2.2" height="9.2"/>
<rect x="375.8" y="38" width="2.2" height="2"/><rect x="379.9" y="38" width="2.2" height="2"/><rect x="384" y="38" width="2.2" height="2"/>
</g>
<!-- rows icon -->
<g fill="#555">
<rect x="375" y="73" width="2" height="1.8"/><rect x="378.3" y="73" width="8.6" height="1.8"/>
<rect x="375" y="77" width="2" height="1.8"/><rect x="378.3" y="77" width="8.6" height="1.8"/>
<rect x="375" y="81" width="2" height="1.8"/><rect x="378.3" y="81" width="8.6" height="1.8"/>
</g>
<g fill="none" stroke="#fff" stroke-width="0.9"><ellipse cx="626.6" cy="74.6" rx="3.3" ry="1.4"/><path d="M623.3 74.6v6.3c0 .7 1.2 1.1 2.5 1.1M629.9 74.6v2.6"/></g>
<circle cx="631" cy="81.2" r="3.2" fill="#e08d4f"/><path d="M629.3 81.2l1.1 1.2l2.3-2.4" fill="none" stroke="#fff" stroke-width="1"/>
<!-- cursor circle -->
<circle cx="420.4" cy="209.5" r="9.6" fill="none" stroke="#111" stroke-width="1.3"/>
<path d="M419.2 210.6v13.2l3-2.9l2 4.8l2.1-.9l-2-4.6h4.2z" fill="#111" stroke="#fff" stroke-width="0.9" stroke-linejoin="round"/>
<!-- nulls badge -->
<rect x="1137" y="885" width="52" height="14" rx="3" fill="#bcbcbc"/>
<path d="M1140 885h10v14h-10a3 3 0 0 1-3-3v-8a3 3 0 0 1 3-3z" fill="#c9c9c9"/>
<text x="1145.4" y="895.4" font-family="Liberation Sans" font-size="11" font-weight="bold" fill="#fff">6 nulls</text>
</svg>


<!-- right window edge -->
<div class="a" style="left:1275px;top:0;width:1px;height:975px;background:#d0d0d0"></div>
<div class="a" style="left:1275px;top:3px;width:1px;height:6px;background:#c9bfd6"></div>
<div class="a" style="left:1275px;top:11px;width:1px;height:1px;background:#555"></div>
<div class="a" style="left:1275px;top:22px;width:1px;height:6px;background:#6a4a3a"></div>
<div class="a" style="left:1275px;top:36px;width:1px;height:1px;background:#555"></div>
<div class="a" style="left:1275px;top:160px;width:1px;height:10px;background:#444"></div>
<div class="a" style="left:1275px;top:237px;width:1px;height:10px;background:#333"></div>
<div class="a" style="left:1275px;top:276px;width:1px;height:13px;background:#333"></div>
<div class="a" style="left:1275px;top:318px;width:1px;height:12px;background:#333"></div>
<div class="a" style="left:1275px;top:369px;width:1px;height:2px;background:#555"></div>
<div class="a" style="left:1275px;top:377px;width:1px;height:2px;background:#555"></div>
<div class="a" style="left:1275px;top:590px;width:1px;height:2px;background:#666"></div>
<div class="a" style="left:1275px;top:664px;width:1px;height:10px;background:#333"></div>
<div class="a" style="left:1275px;top:704px;width:1px;height:11px;background:#333"></div>

<!-- BOTTOM TABS -->
<div class="a" style="left:0;top:975px;width:1276px;height:5px;background:#e6e6e6;border-top:1px solid #d3d3d3"></div>
<div class="a" style="left:122px;top:976px;width:169px;height:4px;background:#fdfdfd;border-left:1px solid #d3d3d3;border-right:1px solid #d3d3d3"></div>
<div class="a" style="left:322px;top:976px;width:1px;height:4px;background:#d3d3d3"></div>
<div class="a" style="left:354px;top:976px;width:1px;height:4px;background:#d3d3d3"></div>
<div class="a" style="left:386px;top:976px;width:1px;height:4px;background:#d3d3d3"></div>
</body></html>
